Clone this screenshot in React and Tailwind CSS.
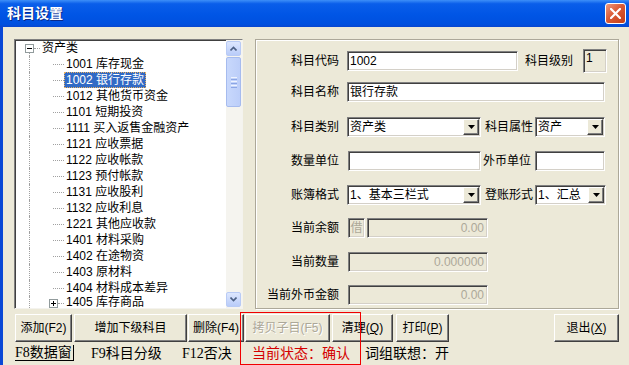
import React from 'react';

const field =
  'border border-t-[#808080] border-l-[#808080] border-r-white border-b-white shadow-[inset_1px_1px_0_#404040,inset_-1px_-1px_0_#D4D0C8]';
const raised =
  'border border-t-white border-l-white border-r-[#404040] border-b-[#404040] shadow-[inset_-1px_-1px_0_#808080] bg-[#ECE9D8]';

const treeItems = [
  '1001 库存现金',
  '1002 银行存款',
  '1012 其他货币资金',
  '1101 短期投资',
  '1111 买入返售金融资产',
  '1121 应收票据',
  '1122 应收帐款',
  '1123 预付帐款',
  '1131 应收股利',
  '1132 应收利息',
  '1221 其他应收款',
  '1401 材料采购',
  '1402 在途物资',
  '1403 原材料',
  '1404 材料成本差异',
];

const Arrow = () => (
  <div className={`${raised} my-[1px] mr-[1px] flex h-[16px] w-[16px] shrink-0 items-center justify-center`}>
    <svg width="7" height="4" viewBox="0 0 7 4">
      <path d="M0 0h7L3.5 4z" fill="#000" />
    </svg>
  </div>
);

const Select = ({ w, value }) => (
  <div className={`${field} flex h-[20px] shrink-0 items-center justify-between bg-white ${w}`}>
    <span className="pl-[2px] leading-none">{value}</span>
    <Arrow />
  </div>
);

const Input = ({ w, value = '' }) => (
  <div className={`${field} flex h-[20px] shrink-0 items-center bg-white pl-[2px] ${w}`}>{value}</div>
);

const Dim = ({ w, value, ml = '' }) => (
  <div className={`${field} flex h-[20px] shrink-0 items-center justify-end bg-[#ECE9D8] pr-[3px] text-[#ACA899] ${w} ${ml}`}>
    {value}
  </div>
);

const Label = ({ children }) => (
  <span className="w-[79px] shrink-0 text-right">{children}</span>
);

const Box = ({ sign }) => (
  <div className="flex h-[9px] w-[9px] items-center justify-center border border-[#919B9C] bg-white">
    <svg width="5" height="5" viewBox="0 0 5 5">
      <path d="M0 2.5h5" stroke="#000" strokeWidth="1" />
      {sign === '+' && <path d="M2.5 0v5" stroke="#000" strokeWidth="1" />}
    </svg>
  </div>
);

const TreeRow = ({ text, sel }) => (
  <div className="flex h-[16px] shrink-0">
    <div className="w-[13px] shrink-0" />
    <div className="w-[24px] shrink-0 border-l border-dotted border-[#A0A0A0]" />
    <div className="flex w-[11px] shrink-0 items-center">
      <div className="w-full border-t border-dotted border-[#A0A0A0]" />
    </div>
    <div className="flex items-center">
      <span
        className={
          sel
            ? 'h-[16px] border border-dotted border-[#E8B060] bg-[#316AC5] px-[1px] leading-[14px] text-white whitespace-nowrap'
            : 'px-[2px] leading-[14px] whitespace-nowrap'
        }
      >
        {text}
      </span>
    </div>
  </div>
);

const Btn = ({ w, children, ml = '', disabled }) => (
  <div
    className={`${raised} flex h-[28px] shrink-0 items-center justify-center ${w} ${ml} ${
      disabled ? 'text-[#ACA899] [text-shadow:1px_1px_0_#fff]' : ''
    }`}
  >
    {children}
  </div>
);

export default function App() {
  return (
    <div className="relative flex h-[365px] w-[629px] flex-col overflow-hidden bg-[#ECE9D8] font-['Liberation_Sans','Noto_Sans_CJK_SC',sans-serif] text-[12px] text-black">
      {/* title bar */}
      <div className="flex h-[27px] shrink-0 items-center justify-between bg-[linear-gradient(to_bottom,#3D8FF8_0%,#0A5EEA_14%,#0055E5_55%,#0050DF_90%,#0846CF_100%)] pl-[7px] pr-[3px]">
        <span className="text-[14px] font-bold text-white [text-shadow:1px_1px_0_#0A2A8A]">科目设置</span>
        <div className="flex h-[21px] w-[21px] items-center justify-center rounded-[3px] border border-white bg-[linear-gradient(135deg,#EE9A80_0%,#DB5B36_45%,#C23E18_100%)]">
          <svg width="11" height="11" viewBox="0 0 11 11">
            <path d="M1 1l9 9M10 1l-9 9" stroke="#fff" strokeWidth="2.2" strokeLinecap="square" />
          </svg>
        </div>
      </div>

      <div className="flex flex-1 flex-col border-l-[3px] border-[#0A48D6] pl-[11px]">
        <div className="flex gap-[12px] pt-[12px]">
          {/* tree */}
          <div className="flex h-[270px] w-[229px] shrink-0 border border-t-[#808080] border-l-[#808080] border-r-[#F4F3EE] border-b-[#F4F3EE] bg-white shadow-[inset_1px_1px_0_#404040]">
            <div className="flex flex-1 flex-col overflow-hidden pl-[1px]">
              <div className="flex h-[16px] shrink-0">
                <div className="w-[9px] shrink-0" />
                <div className="flex w-[9px] shrink-0 flex-col">
                  <div className="h-[4px]" />
                  <Box sign="-" />
                  <div className="ml-[4px] flex-1 border-l border-dotted border-[#A0A0A0]" />
                </div>
                <div className="flex w-[6px] shrink-0 items-center">
                  <div className="w-full border-t border-dotted border-[#A0A0A0]" />
                </div>
                <div className="flex items-center">
                  <span className="px-[2px] leading-[14px]">资产类</span>
                </div>
              </div>
              {treeItems.map((t, i) => (
                <TreeRow key={t} text={t} sel={i === 1} />
              ))}
              <div className="flex h-[12px] shrink-0">
                <div className="w-[13px] shrink-0" />
                <div className="w-[20px] shrink-0 border-l border-dotted border-[#A0A0A0]" />
                <div className="flex items-center pt-[2px]">
                  <Box sign="+" />
                </div>
                <div className="flex w-[6px] shrink-0 items-center pt-[2px]">
                  <div className="w-full border-t border-dotted border-[#A0A0A0]" />
                </div>
                <div className="flex items-start pt-[1px]">
                  <span className="px-[2px] leading-[11px] whitespace-nowrap">1405 库存商品</span>
                </div>
              </div>
            </div>
            {/* scrollbar */}
            <div className="flex w-[16px] shrink-0 flex-col bg-[#F5F4EF] py-[1px] pr-[1px]">
              <div className="flex h-[15px] items-center justify-center rounded-[2px] border border-[#B9CBF5] bg-[linear-gradient(to_bottom,#DDE7FE,#B9CCF9)]">
                <svg width="7" height="5" viewBox="0 0 7 5">
                  <path d="M0.5 4.5L3.5 1.5L6.5 4.5" stroke="#4D6185" strokeWidth="1.6" fill="none" />
                </svg>
              </div>
              <div className="mt-[1px] flex h-[50px] flex-col items-center justify-center gap-[1px] rounded-[2px] border border-[#A6BBEE] bg-[linear-gradient(to_right,#C8D8FC,#BCCEF9)]">
                <div className="h-[1px] w-[6px] bg-[#EEF3FE]" />
                <div className="h-[1px] w-[6px] bg-[#8CA6E4]" />
                <div className="h-[1px] w-[6px] bg-[#EEF3FE]" />
                <div className="h-[1px] w-[6px] bg-[#8CA6E4]" />
                <div className="h-[1px] w-[6px] bg-[#EEF3FE]" />
                <div className="h-[1px] w-[6px] bg-[#8CA6E4]" />
              </div>
              <div className="flex-1" />
              <div className="flex h-[15px] items-center justify-center rounded-[2px] border border-[#B9CBF5] bg-[linear-gradient(to_bottom,#DDE7FE,#B9CCF9)]">
                <svg width="7" height="5" viewBox="0 0 7 5">
                  <path d="M0.5 0.5L3.5 3.5L6.5 0.5" stroke="#4D6185" strokeWidth="1.6" fill="none" />
                </svg>
              </div>
            </div>
          </div>

          {/* form panel */}
          <div className="flex h-[270px] w-[364px] shrink-0 flex-col border border-[#ACA899] pl-[4px] shadow-[inset_1px_1px_0_#fff,1px_1px_0_#fff]">
            <div className="mt-[11px] flex h-[20px] items-center">
              <Label>科目代码</Label>
              <Input w="ml-[8px] w-[171px]" value="1002" />
              <span className="ml-[7px] w-[58px] shrink-0">科目级别</span>
              <div className={`${field} h-[24px] w-[24px] shrink-0 bg-[#ECE9D8] pl-[2px] leading-[16px]`}>1</div>
            </div>
            <div className="mt-[11px] flex h-[20px] items-center">
              <Label>科目名称</Label>
              <Input w="ml-[8px] w-[258px]" value="银行存款" />
            </div>
            <div className="mt-[15px] flex h-[20px] items-center">
              <Label>科目类别</Label>
              <Select w="ml-[8px] w-[134px]" value="资产类" />
              <span className="ml-[4px] w-[50px] shrink-0">科目属性</span>
              <Select w="w-[70px]" value="资产" />
            </div>
            <div className="mt-[14px] flex h-[20px] items-center">
              <Label>数量单位</Label>
              <Input w="ml-[9px] w-[133px]" />
              <span className="ml-[2px] w-[52px] shrink-0">外币单位</span>
              <Input w="w-[70px]" />
            </div>
            <div className="mt-[14px] flex h-[20px] items-center">
              <Label>账簿格式</Label>
              <Select w="ml-[8px] w-[134px]" value="1、基本三栏式" />
              <span className="ml-[4px] w-[50px] shrink-0">登账形式</span>
              <Select w="w-[71px]" value="1、汇总" />
            </div>
            <div className="mt-[13px] flex h-[20px] items-center">
              <Label>当前余额</Label>
              <div className={`${field} ml-[9px] flex h-[20px] w-[17px] shrink-0 items-center justify-center bg-[#ECE9D8] text-[#ACA899]`}>借</div>
              <Dim ml="ml-[2px]" w="w-[121px]" value="0.00" />
            </div>
            <div className="mt-[14px] flex h-[20px] items-center">
              <Label>当前数量</Label>
              <Dim ml="ml-[9px]" w="w-[140px]" value="0.000000" />
            </div>
            <div className="mt-[13px] flex h-[20px] items-center">
              <Label>当前外币金额</Label>
              <Dim ml="ml-[9px]" w="w-[140px]" value="0.00" />
            </div>
          </div>
        </div>

        {/* buttons */}
        <div className="mt-[5px] flex pr-[10px]">
          <Btn ml="ml-[1px]" w="w-[57px]">添加(F2)</Btn>
          <Btn ml="ml-[2px]" w="w-[113px]">增加下级科目</Btn>
          <Btn ml="ml-[1px]" w="w-[56px]">删除(F4)</Btn>
          <Btn ml="ml-[1px]" w="w-[85px]" disabled>拷贝子目(F5)</Btn>
          <Btn ml="ml-[2px]" w="w-[61px]">
            清理(<span className="underline">Q</span>)
          </Btn>
          <Btn ml="ml-[3px]" w="w-[53px]">
            打印(<span className="underline">P</span>)
          </Btn>
          <Btn ml="ml-auto" w="w-[65px]">
            退出(<span className="underline">X</span>)
          </Btn>
        </div>

        {/* status line */}
        <div className="mt-[1px] flex h-[20px] items-center font-['Liberation_Serif','Noto_Sans_CJK_SC',serif] text-[14px]">
          <span className="ml-[1px] w-[59px] shrink-0 border-r border-b border-black leading-[15px]">F8数据窗</span>
          <span className="ml-[17px] w-[74px] shrink-0">F9科目分级</span>
          <span className="ml-[17px] w-[70px] shrink-0">F12否决</span>
          <span className="w-[113px] shrink-0 text-[#D40000]">当前状态：确认</span>
          <span className="shrink-0">词组联想：开</span>
        </div>
      </div>

      {/* annotation frame */}
      <div className="absolute left-[240px] top-[312px] h-[53px] w-[121px] border border-[#F00000]" />
    </div>
  );
}
